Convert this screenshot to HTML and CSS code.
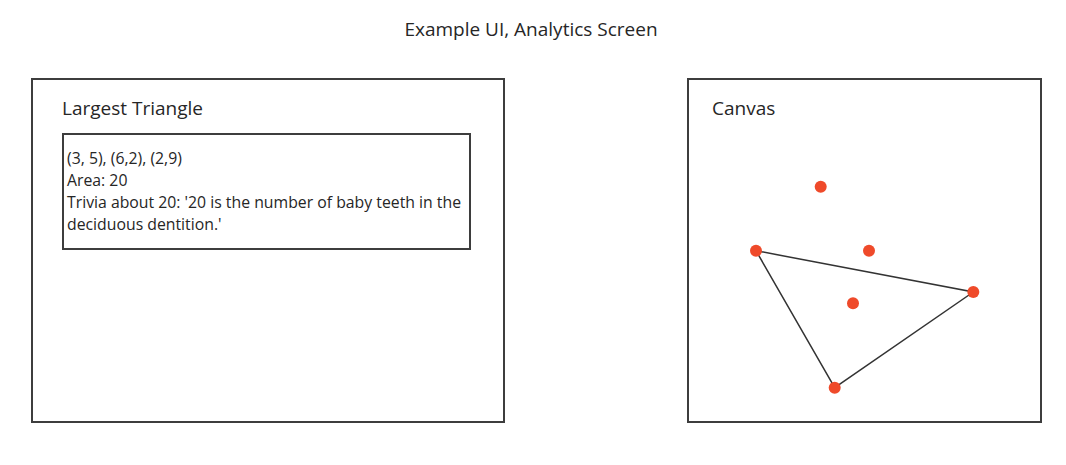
FILE: index.html
```html
<!DOCTYPE html>
<html lang="en">
<head>
    <meta charset="UTF-8">
    <meta name="viewport" content="width=device-width, initial-scale=1.0">
    <title>Example UI, Analytics Screen</title>
    <link rel="stylesheet" href="styles.css">
</head>
<body>
    <h1 class="page-title">Example UI, Analytics Screen</h1>

    <div class="panels">
        <div class="panel panel-result">
            <h2>Largest Triangle</h2>
            <div class="result-box">
                <div>(3, 5), (6,2), (2,9)</div>
                <div>Area: 20</div>
                <div>Trivia about 20: '20 is the number of baby teeth in the deciduous dentition.'</div>
            </div>
        </div>

        <div class="panel panel-canvas">
            <h2>Canvas</h2>
            <svg class="plot" width="351" height="300" viewBox="0 0 351 300">
                <polygon class="triangle" points="67,129.7 284.3,171 145.7,266.7"></polygon>
                <circle class="point" cx="131.7" cy="65.7" r="6"></circle>
                <circle class="point" cx="67" cy="129.7" r="6"></circle>
                <circle class="point" cx="180" cy="129.7" r="6"></circle>
                <circle class="point" cx="164" cy="182.3" r="6"></circle>
                <circle class="point" cx="284.3" cy="171" r="6"></circle>
                <circle class="point" cx="145.7" cy="266.7" r="6"></circle>
            </svg>
        </div>
    </div>
</body>
</html>
```

FILE: styles.css
```css
body {
    margin: 0;
    font-family: "Open Sans", Arial, sans-serif;
    color: #262626;
    background-color: white;
}
.page-title {
    margin: 17px 0 0 0;
    font-size: 19px;
    font-weight: normal;
    line-height: 24px;
    text-align: center;
    padding-right: 4px;
}
.panels {
    display: flex;
    justify-content: space-between;
    margin-top: 37px;
    padding: 0 24px 0 31px;
}
.panel {
    height: 345px;
    border: 2px solid #3d3d3d;
    box-sizing: border-box;
}
.panel h2 {
    margin: 0;
    font-size: 19px;
    font-weight: normal;
    line-height: 24px;
}
.panel-result {
    width: 474px;
    padding: 16px 0 0 29px;
}
.panel-canvas {
    width: 355px;
    display: flex;
    flex-direction: column;
}
.panel-canvas h2 {
    padding: 16px 0 0 23px;
    height: 25px;
}
.result-box {
    width: 409px;
    margin-top: 13px;
    padding: 12px 4px 13px 3px;
    border: 2px solid #3d3d3d;
    box-sizing: border-box;
    font-size: 15.8px;
    line-height: 22px;
}
.plot {
    display: block;
}
.triangle {
    fill: none;
    stroke: #333;
    stroke-width: 1.5;
}
.point {
    fill: #ef4a2a;
}
```
